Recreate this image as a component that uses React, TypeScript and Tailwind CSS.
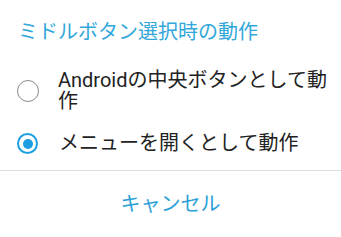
export default function App() {
  const font = { fontFamily: '"Roboto", "Noto Sans CJK JP", sans-serif' };
  return (
    <div
      className="w-[341px] h-[237px] bg-white flex flex-col overflow-hidden"
      style={font}
    >
      {/* title */}
      <div className="pl-[18px] pt-[18px] pb-[11px] text-[20px] leading-[28px] text-[#33a7da]">
        ミドルボタン選択時の動作
      </div>

      {/* options */}
      <div className="flex items-center pt-[13px] pb-[11px] pl-[17px] pr-[14px]">
        <span className="w-[22px] h-[22px] shrink-0 rounded-full border-[1.5px] border-[#8a8a8a]" />
        <span className="ml-[19px] text-[20px] leading-[21px] text-[#222]">
          Androidの中央ボタンとして動作
        </span>
      </div>
      <div className="flex items-center pt-[10px] pb-[12px] pl-[17px] pr-[14px]">
        <span className="w-[21px] h-[21px] shrink-0 rounded-full border-[2.5px] border-[#1b9fe2] flex items-center justify-center">
          <span className="w-[10px] h-[10px] rounded-full bg-[#1b9fe2]" />
        </span>
        <span className="ml-[21px] text-[20px] leading-[21px] text-[#222]">
          メニューを開くとして動作
        </span>
      </div>

      <div className="mt-[4px] h-px bg-[#dcdcdc]" />

      {/* button */}
      <div className="flex-1 flex items-center justify-center text-[20px] text-[#2a9fd8]">
        キャンセル
      </div>
    </div>
  );
}
